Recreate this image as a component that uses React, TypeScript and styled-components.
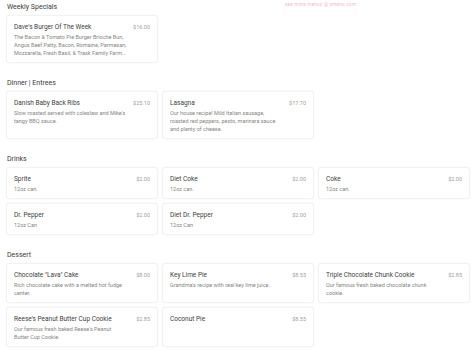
import styled, { createGlobalStyle } from 'styled-components'

const GlobalStyle = createGlobalStyle`
    body {
        margin: 0;
        background: #fff;
        font-family: Roboto, 'Liberation Sans', sans-serif;
        color: #333;
    }
`

const Page = styled.div`
    padding: 2px 4px 6px 6px;
    display: flex;
    flex-direction: column;
    gap: 15px;
`

const Section = styled.section`
    display: flex;
    flex-direction: column;
    gap: 2px;
`

const SectionHeader = styled.div`
    display: flex;
    align-items: flex-start;
`

const SectionTitle = styled.h2`
    margin: 0 0 0 1px;
    font-size: 7px;
    line-height: 11px;
    font-weight: 400;
    color: #3a3a3a;
`

const ZmenuLink = styled.a`
    margin-left: auto;
    margin-right: 114px;
    font-size: 4.6px;
    line-height: 6px;
    color: #f3b9c8;
    text-decoration: none;
    letter-spacing: 0.25px;
`

const Grid = styled.div`
    display: grid;
    grid-template-columns: repeat(3, 1fr);
    gap: 4px;
`

const Card = styled.div`
    display: flex;
    gap: 5px;
    padding: 6px 7px 5px 7px;
    background: #fff;
    border: 1px solid #f2f2f2;
    border-radius: 3px;
    box-shadow: 0 0 2px rgba(0, 0, 0, 0.05);
`

const Info = styled.div`
    flex: 1;
    min-width: 0;
`

const ItemName = styled.div`
    font-size: 6.5px;
    line-height: 10px;
    color: #404040;
`

const Description = styled.div`
    margin-top: 1px;
    font-size: 5.5px;
    line-height: 8px;
    color: #858585;
    display: -webkit-box;
    -webkit-box-orient: vertical;
    -webkit-line-clamp: 3;
    overflow: hidden;
`

const Price = styled.div`
    min-width: 18px;
    text-align: right;
    font-size: 5.5px;
    line-height: 10px;
    color: #a0a0a0;
`

type Item = { name: string; price: string; desc?: string }

const menu: { title: string; items: Item[] }[] = [
    {
        title: 'Weekly Specials',
        items: [
            {
                name: "Dave's Burger Of The Week",
                price: '$16.00',
                desc: 'The Bacon & Tomato Pie Burger Brioche Bun, Angus Beef Patty, Bacon, Romaine, Parmesan, Mozzarella, Fresh Basil, & Trask Family Farm Tomatoes',
            },
        ],
    },
    {
        title: 'Dinner | Entrees',
        items: [
            {
                name: 'Danish Baby Back Ribs',
                price: '$25.10',
                desc: "Slow roasted served with coleslaw and Mike's tangy BBQ sauce.",
            },
            {
                name: 'Lasagna',
                price: '$17.70',
                desc: 'Our house recipe! Mild Italian sausage, roasted red peppers, pesto, marinara sauce and plenty of cheese.',
            },
        ],
    },
    {
        title: 'Drinks',
        items: [
            { name: 'Sprite', price: '$2.00', desc: '12oz can.' },
            { name: 'Diet Coke', price: '$2.00', desc: '12oz can.' },
            { name: 'Coke', price: '$2.00', desc: '12oz can.' },
            { name: 'Dr. Pepper', price: '$2.00', desc: '12oz Can' },
            { name: 'Diet Dr. Pepper', price: '$2.00', desc: '12oz Can' },
        ],
    },
    {
        title: 'Dessert',
        items: [
            {
                name: 'Chocolate "Lava" Cake',
                price: '$8.00',
                desc: 'Rich chocolate cake with a melted hot fudge center.',
            },
            {
                name: 'Key Lime Pie',
                price: '$8.55',
                desc: "Grandma's recipe with real key lime juice.",
            },
            {
                name: 'Triple Chocolate Chunk Cookie',
                price: '$2.85',
                desc: 'Our famous fresh baked chocolate chunk cookie.',
            },
            {
                name: "Reese's Peanut Butter Cup Cookie",
                price: '$2.85',
                desc: "Our famous fresh baked Reese's Peanut Butter Cup Cookie.",
            },
            { name: 'Coconut Pie', price: '$8.55' },
        ],
    },
]

const App = () => {
    return (
        <>
            <GlobalStyle />
            <Page>
                {menu.map((section, i) => (
                    <Section key={section.title}>
                        <SectionHeader>
                            <SectionTitle>{section.title}</SectionTitle>
                            {i === 0 && <ZmenuLink href="#">see more menus @ zmenu.com</ZmenuLink>}
                        </SectionHeader>
                        <Grid>
                            {section.items.map(item => (
                                <Card key={item.name}>
                                    <Info>
                                        <ItemName>{item.name}</ItemName>
                                        {item.desc && <Description>{item.desc}</Description>}
                                    </Info>
                                    <Price>{item.price}</Price>
                                </Card>
                            ))}
                        </Grid>
                    </Section>
                ))}
            </Page>
        </>
    )
}

export default App
